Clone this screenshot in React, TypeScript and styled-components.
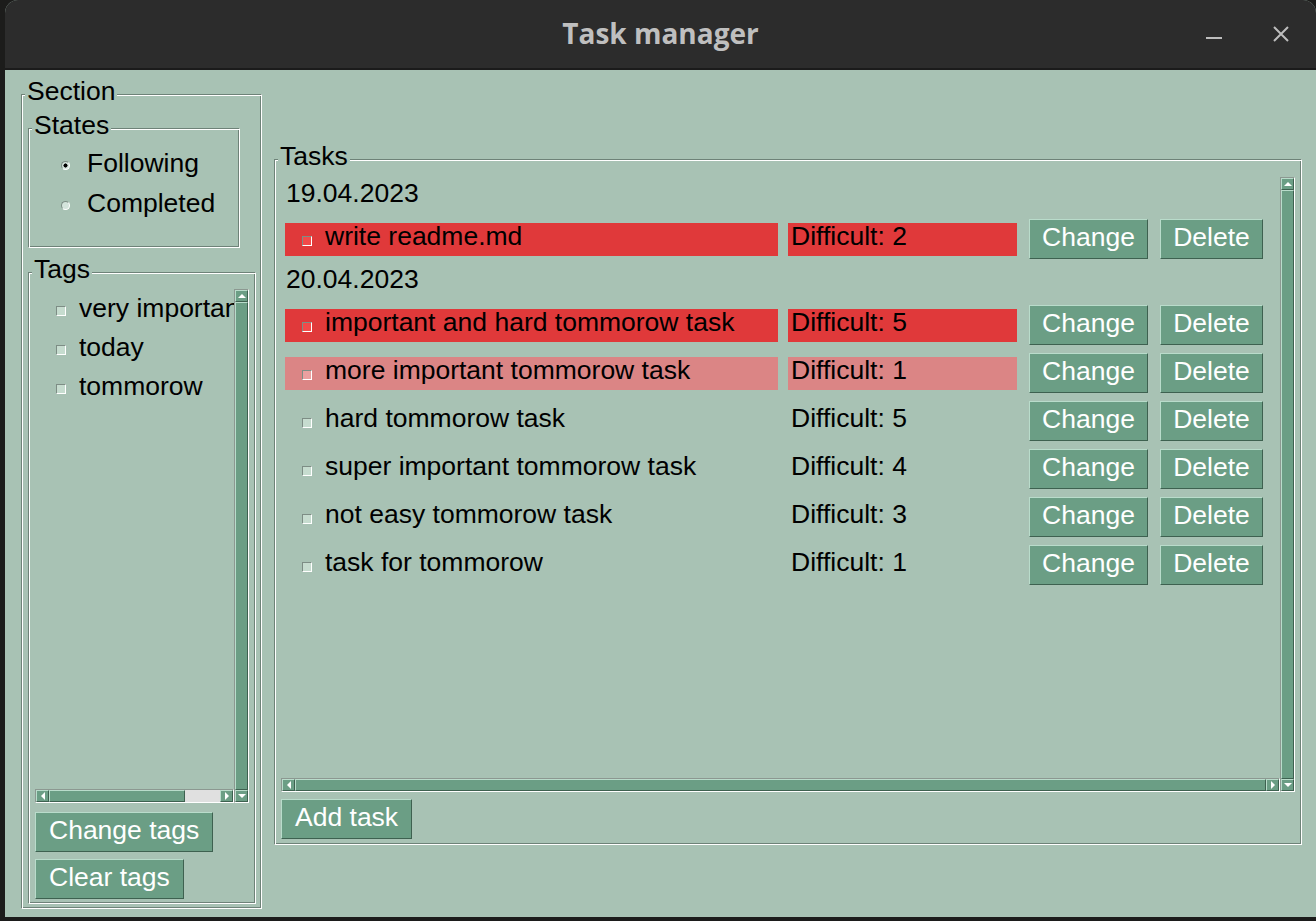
import styled, { createGlobalStyle } from 'styled-components';

const BG = '#a8c2b4';
const GREEN = '#6b9e85';

const GlobalStyle = createGlobalStyle`
  html, body {
    margin: 0;
    padding: 0;
    background: #1c1c1b;
  }
  body {
    font-family: "Liberation Sans", Arial, sans-serif;
    font-size: 26.5px;
    color: #000;
  }
`;

type Tone = 'hot' | 'warm' | undefined;

type Task = { title: string; difficult: number; tone?: Tone };
type Day = { date: string; tasks: Task[] };

const days: Day[] = [
  {
    date: '19.04.2023',
    tasks: [{ title: 'write readme.md', difficult: 2, tone: 'hot' }],
  },
  {
    date: '20.04.2023',
    tasks: [
      { title: 'important and hard tommorow task', difficult: 5, tone: 'hot' },
      { title: 'more important tommorow task', difficult: 1, tone: 'warm' },
      { title: 'hard tommorow task', difficult: 5 },
      { title: 'super important tommorow task', difficult: 4 },
      { title: 'not easy tommorow task', difficult: 3 },
      { title: 'task for tommorow', difficult: 1 },
    ],
  },
];

const tags = ['very important', 'today', 'tommorow'];

export default function App() {
  return (
    <>
      <GlobalStyle />
      <Window>
        <TitleBar>
          <span />
          <Title>Task manager</Title>
          <Controls>
            <WinButton>
              <svg width="16" height="16" viewBox="0 0 16 16">
                <line x1="0" y1="12" x2="16" y2="12" stroke="#bdbdbd" strokeWidth="2" />
              </svg>
            </WinButton>
            <WinButton>
              <svg width="16" height="16" viewBox="0 0 16 16">
                <path d="M1 1 L15 15 M15 1 L1 15" stroke="#bdbdbd" strokeWidth="2" />
              </svg>
            </WinButton>
          </Controls>
        </TitleBar>

        <Body>
          <SectionFrame>
            <Legend>Section</Legend>
            <StatesFrame>
              <Legend>States</Legend>
              <RadioRow>
                <RadioDot $checked />
                <span>Following</span>
              </RadioRow>
              <RadioRow>
                <RadioDot />
                <span>Completed</span>
              </RadioRow>
            </StatesFrame>

            <TagsFrame>
              <Legend>Tags</Legend>
              <ScrollArea>
                <TagList>
                  {tags.map((tag) => (
                    <TagRow key={tag}>
                      <CheckBox />
                      <span>{tag}</span>
                    </TagRow>
                  ))}
                </TagList>
                <ScrollBar $vertical>
                  <Arrow><Tri $dir="up" /></Arrow>
                  <Thumb $fill={100} />
                  <Arrow><Tri $dir="down" /></Arrow>
                </ScrollBar>
                <ScrollBar>
                  <Arrow><Tri $dir="left" /></Arrow>
                  <Thumb $fill={69} />
                  <Trough />
                  <Arrow><Tri $dir="right" /></Arrow>
                </ScrollBar>
              </ScrollArea>
              <Button $first>Change tags</Button>
              <Button>Clear tags</Button>
            </TagsFrame>
          </SectionFrame>

          <TasksFrame>
            <Legend>Tasks</Legend>
            <ScrollArea>
              <TaskCanvas>
                {days.map((day) => (
                  <div key={day.date}>
                    <DateRow><Caption>{day.date}</Caption></DateRow>
                    {day.tasks.map((task) => (
                      <TaskRow key={task.title}>
                        <TitleCell $tone={task.tone}>
                          <CheckBox $tone={task.tone} />
                          <Caption>{task.title}</Caption>
                        </TitleCell>
                        <DiffCell $tone={task.tone}>
                          <Caption>Difficult: {task.difficult}</Caption>
                        </DiffCell>
                        <RowButton $width={119}>Change</RowButton>
                        <RowButton $width={103}>Delete</RowButton>
                      </TaskRow>
                    ))}
                  </div>
                ))}
              </TaskCanvas>
              <ScrollBar $vertical>
                <Arrow><Tri $dir="up" /></Arrow>
                <Thumb $fill={100} />
                <Arrow><Tri $dir="down" /></Arrow>
              </ScrollBar>
              <ScrollBar>
                <Arrow><Tri $dir="left" /></Arrow>
                <Thumb $fill={100} />
                <Arrow><Tri $dir="right" /></Arrow>
              </ScrollBar>
            </ScrollArea>
            <Button $first $gap={7}>Add task</Button>
          </TasksFrame>
        </Body>
      </Window>
    </>
  );
}

const Window = styled.div`
  margin-left: 5px;
  width: 1311px;
  height: 917px;
  display: flex;
  flex-direction: column;
  border-radius: 13px 13px 0 0;
  overflow: hidden;
  background: ${BG};
`;

const TitleBar = styled.div`
  height: 68px;
  flex: none;
  background: #2c2c2c;
  border-bottom: 2px solid #1b1b1b;
  display: grid;
  grid-template-columns: 1fr auto 1fr;
  align-items: center;
`;

const Title = styled.span`
  font-family: "Open Sans", "Noto Sans", sans-serif;
  font-weight: 700;
  font-size: 28px;
  color: #bfbfbf;
  padding-bottom: 2px;
`;

const Controls = styled.div`
  justify-self: end;
  display: flex;
  gap: 27px;
  padding-right: 15px;
`;

const WinButton = styled.div`
  width: 40px;
  height: 40px;
  display: flex;
  align-items: center;
  justify-content: center;
`;

const Body = styled.div`
  flex: 1;
  display: flex;
  align-items: flex-start;
  gap: 12px;
  padding: 24px 14px 0 16px;
`;

const Frame = styled.div`
  position: relative;
  box-sizing: border-box;
  border: 1px solid;
  border-color: #6e8278 #fff #fff #6e8278;
  box-shadow: inset 1px 1px 0 #fff, inset -1px -1px 0 #6e8278;
  display: flex;
  flex-direction: column;
  align-items: flex-start;
`;

const Legend = styled.span`
  position: absolute;
  top: -19px;
  left: 3px;
  padding: 0 2px;
  line-height: 30px;
  background: ${BG};
`;

const SectionFrame = styled(Frame)`
  width: 241px;
  height: 815px;
  flex: none;
  padding: 33px 6px 0 6px;
`;

const StatesFrame = styled(Frame)`
  width: 212px;
  height: 120px;
  padding-top: 14px;
`;

const RadioRow = styled.div`
  height: 40px;
  display: flex;
  align-items: center;
  gap: 17px;
  padding-left: 32px;
`;

const RadioDot = styled.span<{ $checked?: boolean }>`
  width: 9px;
  height: 9px;
  margin-top: 4px;
  box-sizing: border-box;
  border-radius: 50%;
  border: 1px solid;
  border-color: #7d8d85 #fff #fff #7d8d85;
  background: ${(p) => (p.$checked ? 'radial-gradient(circle, #000 0 1.8px, #d4e4dc 2.3px)' : '#d4e4dc')};
`;

const TagsFrame = styled(Frame)`
  width: 228px;
  height: 632px;
  margin-top: 24px;
  padding: 16px 6px 0 6px;
`;

const ScrollArea = styled.div`
  display: grid;
  grid-template-columns: 1fr 15px;
  grid-template-rows: 1fr 14px;
  width: 100%;
  flex: none;
  height: 514px;
`;

const TagList = styled.div`
  overflow: hidden;
  white-space: nowrap;
`;

const TagRow = styled.div`
  height: 39px;
  display: flex;
  align-items: center;
  gap: 13px;
  padding-left: 21px;
`;

const checkFill = (tone: Tone) =>
  tone === 'hot' ? '#f24a4a' : tone === 'warm' ? '#eaa0a0' : '#c6dccf';

const CheckBox = styled.span<{ $tone?: Tone }>`
  flex: none;
  width: 10px;
  height: 10px;
  margin-top: 4px;
  box-sizing: border-box;
  border: 1px solid;
  border-color: #7d8d85 #fff #fff #7d8d85;
  background: ${(p) => checkFill(p.$tone)};
`;

const Caption = styled.span`
  margin-bottom: 6px;
`;

const ScrollBar = styled.div<{ $vertical?: boolean }>`
  display: flex;
  flex-direction: ${(p) => (p.$vertical ? 'column' : 'row')};
  box-sizing: border-box;
  border: 1px solid;
  border-color: #8c9891 #fff #fff #8c9891;
  background: #e0e0e0;
  grid-row: ${(p) => (p.$vertical ? '1 / 3' : 'auto')};
  grid-column: ${(p) => (p.$vertical ? '2' : '1')};
`;

const Arrow = styled.div`
  flex: none;
  width: 13px;
  height: 12px;
  box-sizing: border-box;
  background: ${GREEN};
  border: 1px solid;
  border-color: #b9dccb #3e6150 #3e6150 #b9dccb;
  display: flex;
  align-items: center;
  justify-content: center;
`;

const Thumb = styled.div<{ $fill: number }>`
  flex: ${(p) => (p.$fill >= 100 ? '1' : `0 0 ${p.$fill}%`)};
  box-sizing: border-box;
  background: ${GREEN};
  border: 1px solid;
  border-color: #b9dccb #3e6150 #3e6150 #b9dccb;
`;

const Trough = styled.div`
  flex: 1;
`;

const Tri = styled.span<{ $dir: 'up' | 'down' | 'left' | 'right' }>`
  width: 0;
  height: 0;
  border-style: solid;
  border-color: transparent;
  ${(p) =>
    p.$dir === 'up'
      ? 'border-width: 0 4px 4px 4px; border-bottom-color: #fff;'
      : p.$dir === 'down'
      ? 'border-width: 4px 4px 0 4px; border-top-color: #fff;'
      : p.$dir === 'left'
      ? 'border-width: 4px 4px 4px 0; border-right-color: #fff;'
      : 'border-width: 4px 0 4px 4px; border-left-color: #fff;'}
`;

const Button = styled.button<{ $first?: boolean; $gap?: number }>`
  flex: none;
  height: 40px;
  margin-top: ${(p) => (p.$first ? p.$gap ?? 9 : 7)}px;
  padding: 0 13px 5px;
  box-sizing: border-box;
  background: ${GREEN};
  color: #fff;
  font-family: "Liberation Sans", Arial, sans-serif;
  font-size: 26.5px;
  line-height: 32px;
  border: 1px solid;
  border-color: #b9dccb #3e6150 #3e6150 #b9dccb;
  border-radius: 0;
`;

const TasksFrame = styled(Frame)`
  flex: 1;
  height: 686px;
  margin-top: 65px;
  padding: 17px 6px 0 6px;

  & > ${ScrollArea} {
    height: 615px;
  }
`;

const TaskCanvas = styled.div`
  overflow: hidden;
  padding-left: 4px;
  white-space: nowrap;
`;

const DateRow = styled.div`
  height: 38px;
  display: flex;
  align-items: center;
  padding-left: 1px;
`;

const TaskRow = styled.div`
  height: 48px;
  display: flex;
  align-items: center;
`;

const toneBg = (tone: Tone) =>
  tone === 'hot' ? '#e0393a' : tone === 'warm' ? '#db8585' : 'transparent';

const TitleCell = styled.div<{ $tone?: Tone }>`
  width: 493px;
  height: 33px;
  flex: none;
  display: flex;
  align-items: center;
  gap: 13px;
  padding-left: 17px;
  box-sizing: border-box;
  background: ${(p) => toneBg(p.$tone)};
`;

const DiffCell = styled.div<{ $tone?: Tone }>`
  width: 229px;
  height: 33px;
  flex: none;
  margin-left: 10px;
  padding-left: 3px;
  box-sizing: border-box;
  display: flex;
  align-items: center;
  background: ${(p) => toneBg(p.$tone)};
`;

const RowButton = styled(Button)<{ $width: number }>`
  width: ${(p) => p.$width}px;
  margin-top: 0;
  margin-left: 12px;
  padding: 0 0 5px;
`;
